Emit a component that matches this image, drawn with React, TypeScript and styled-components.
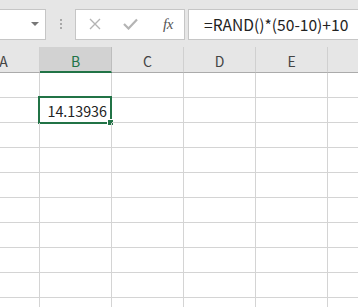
import React from 'react';
import styled, {createGlobalStyle} from 'styled-components';

const GlobalStyle = createGlobalStyle`
  html, body {
    margin: 0;
    padding: 0;
    background: #ffffff;
    overflow: hidden;
  }
  body {
    font-family: "Noto Sans CJK JP", "Noto Sans", "Liberation Sans", sans-serif;
  }
`;

// F lies past the right edge, so its letter is never seen
const columns = ['A', 'B', 'C', 'D', 'E', ''];
const rowCount = 10;
const selectedCol = 1;
const selectedRow = 1;

const Page = styled.div`
  width: 358px;
  height: 307px;
  overflow: hidden;
  background: #ffffff;
`;

const Toolbar = styled.div`
  align-items: center;
  background: #e6e6e6;
  display: flex;
  height: 47px;
  padding-top: 1px;
  box-sizing: border-box;
`;

const NameBox = styled.div`
  align-items: center;
  background: #ffffff;
  border: 1px solid #c6c6c6;
  border-left: none;
  box-sizing: border-box;
  display: flex;
  height: 31px;
  justify-content: flex-end;
  padding-right: 6px;
  width: 46px;
`;

const Caret = styled.div`
  border-left: 4px solid transparent;
  border-right: 4px solid transparent;
  border-top: 4px solid #777777;
  height: 0;
  width: 0;
`;

const Grip = styled.div`
  display: flex;
  flex-direction: column;
  gap: 2px;
  margin: 0 13px 0 14px;
`;

const GripDot = styled.span`
  background: #a8a8a8;
  display: block;
  height: 2px;
  width: 2px;
`;

const ButtonGroup = styled.div`
  align-items: center;
  background: #ffffff;
  border: 1px solid #c6c6c6;
  box-sizing: border-box;
  display: flex;
  height: 31px;
  width: 110px;
  padding-left: 13px;
  gap: 22px;
`;

const FxLabel = styled.span`
  color: #555555;
  font-family: "Liberation Serif", "DejaVu Serif", serif;
  font-size: 15px;
  font-style: italic;
  margin-left: 3px;
  letter-spacing: -0.5px;
`;

const FormulaInput = styled.div`
  align-items: center;
  background: #ffffff;
  border: 1px solid #c6c6c6;
  border-right: none;
  box-sizing: border-box;
  color: #222222;
  display: flex;
  flex: 1;
  font-size: 15.6px;
  height: 31px;
  margin-left: 3px;
  padding-left: 15px;
  white-space: nowrap;
`;

const Sheet = styled.div`
  margin-left: -32px;
`;

const HeaderRow = styled.div`
  background: #e6e6e6;
  border-bottom: 1px solid #ababab;
  display: flex;
  height: 26px;
  box-sizing: border-box;
`;

const HeaderCell = styled.div<{$active?: boolean}>`
  align-items: center;
  background: ${({$active}) => ($active ? '#d2d2d2' : 'transparent')};
  border-bottom: 2px solid ${({$active}) => ($active ? '#217346' : 'transparent')};
  border-right: 1px solid ${({$active}) => ($active ? '#bdbdbd' : '#d0d0d0')};
  box-sizing: border-box;
  color: ${({$active}) => ($active ? '#217346' : '#444444')};
  display: flex;
  flex: 0 0 72px;
  font-size: 14px;
  justify-content: center;
  margin-bottom: -1px;
  padding-top: 3px;
`;

const Row = styled.div`
  display: flex;
  height: 25px;
`;

const Cell = styled.div`
  align-items: center;
  border-bottom: 1px solid #d4d4d4;
  border-right: 1px solid #d4d4d4;
  box-sizing: border-box;
  color: #222222;
  display: flex;
  flex: 0 0 72px;
  font-size: 14.3px;
  justify-content: flex-end;
  padding-right: 4px;
  position: relative;
`;

const Selection = styled.div`
  border: 2px solid #217346;
  bottom: -2px;
  left: -2px;
  pointer-events: none;
  position: absolute;
  right: -1px;
  top: -2px;
`;

const FillHandle = styled.div`
  background: #217346;
  border: 1px solid #ffffff;
  bottom: -4px;
  height: 5px;
  position: absolute;
  right: -4px;
  width: 5px;
`;

const CancelIcon = () => (
  <svg width="12" height="12" viewBox="0 0 12 12">
    <path d="M1 1 L11 11 M11 1 L1 11" stroke="#b4b4b4" strokeWidth="1.4" fill="none" />
  </svg>
);

const EnterIcon = () => (
  <svg width="15" height="12" viewBox="0 0 15 12">
    <path d="M1 6 L5.5 10.5 L14 1.5" stroke="#b4b4b4" strokeWidth="2.2" fill="none" />
  </svg>
);

const App = () => {
  const rows = Array.from({length: rowCount}, (_, i) => i);

  return (
    <Page>
      <GlobalStyle />
      <Toolbar>
        <NameBox>
          <Caret />
        </NameBox>
        <Grip>
          <GripDot />
          <GripDot />
          <GripDot />
        </Grip>
        <ButtonGroup>
          <CancelIcon />
          <EnterIcon />
          <FxLabel>fx</FxLabel>
        </ButtonGroup>
        <FormulaInput>=RAND()*(50-10)+10</FormulaInput>
      </Toolbar>
      <Sheet>
        <HeaderRow>
          {columns.map((col, i) => (
            <HeaderCell key={i} $active={i === selectedCol}>
              {col}
            </HeaderCell>
          ))}
        </HeaderRow>
        {rows.map((r) => (
          <Row key={r}>
            {columns.map((col, c) => {
              const selected = r === selectedRow && c === selectedCol;
              return (
                <Cell key={c}>
                  {selected && '14.13936'}
                  {selected && (
                    <Selection>
                      <FillHandle />
                    </Selection>
                  )}
                </Cell>
              );
            })}
          </Row>
        ))}
      </Sheet>
    </Page>
  );
};

export default App;
